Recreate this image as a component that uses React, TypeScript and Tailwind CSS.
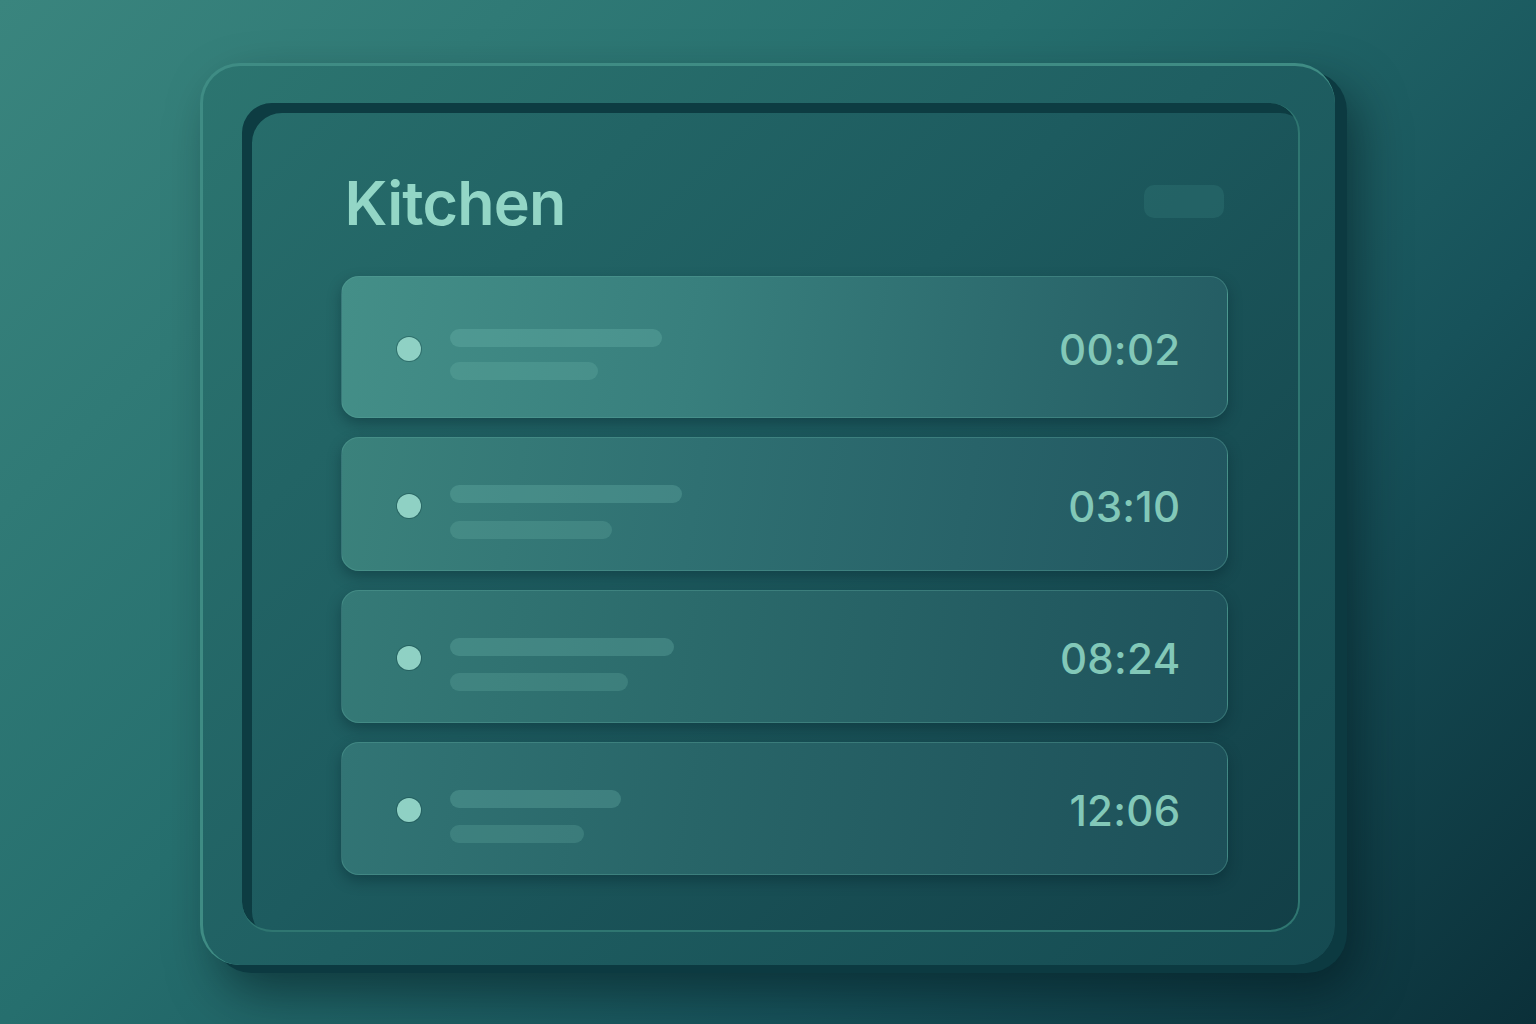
import React from 'react';

type Timer = {
  time: string;
  line1: number;
  line2: number;
  gap: number;
  height: number;
  bg: string;
};

const timers: Timer[] = [
  { time: '00:02', line1: 212, line2: 148, gap: 15, height: 142, bg: 'bg-[linear-gradient(100deg,#448f88_0%,#387f7d_40%,#245c63_100%)]' },
  { time: '03:10', line1: 232, line2: 162, gap: 18, height: 134, bg: 'bg-[linear-gradient(100deg,#3b827c_0%,#2f7072_40%,#215660_100%)]' },
  { time: '08:24', line1: 224, line2: 178, gap: 17, height: 133, bg: 'bg-[linear-gradient(100deg,#357a77_0%,#2b6a6b_40%,#1e525b_100%)]' },
  { time: '12:06', line1: 171, line2: 134, gap: 17, height: 133, bg: 'bg-[linear-gradient(100deg,#327575_0%,#286568_40%,#1d5059_100%)]' },
];

function TimerCard({ t }: { t: Timer }) {
  return (
    <div
      className={`flex items-center rounded-[18px] border border-[#5aa59c]/40 pl-[55px] pr-[46px] shadow-[0_6px_14px_rgba(4,30,36,0.35)] ${t.bg}`}
      style={{ height: t.height }}
    >
      <div className="mt-[3px] h-[24px] w-[24px] shrink-0 rounded-full bg-[#8fd1c4] shadow-[0_0_0_1px_rgba(20,70,70,0.4)]" />
      <div className="ml-[29px] mt-[15px] flex flex-col" style={{ gap: t.gap }}>
        <div className="h-[18px] rounded-full bg-[#7cc7bb]/25" style={{ width: t.line1 }} />
        <div className="h-[18px] rounded-full bg-[#7cc7bb]/20" style={{ width: t.line2 }} />
      </div>
      <div className="ml-auto mt-[5px] text-[42px] font-medium leading-none tracking-[0.3px] text-[#82c8b8] [font-family:Inter,'Noto_Sans',sans-serif]">
        {t.time}
      </div>
    </div>
  );
}

export default function App() {
  return (
    <div className="flex h-[1024px] w-[1536px] items-center justify-center overflow-hidden bg-[linear-gradient(135deg,#3a857e_0%,#266f6e_40%,#17525a_70%,#0b3039_100%)] [font-family:Inter,'Noto_Sans',sans-serif]">
      <div className="ml-[-2px] mt-[4px] h-[902px] w-[1135px] rounded-[40px] border-t-[3px] border-l-[3px] border-[#3f8c84] bg-[linear-gradient(135deg,#2c7570_0%,#1f5f62_50%,#154a51_100%)] pl-[39px] pt-[37px] shadow-[12px_8px_0_#0c3a41,20px_26px_50px_rgba(2,20,26,0.55)]">
        <div className="flex h-[829px] w-[1058px] flex-col rounded-[30px] border-r-2 border-b-2 border-[#2f7671] bg-[linear-gradient(135deg,#276d6b_0%,#1d5b5f_45%,#123f47_100%)] pl-[99px] pr-[70px] shadow-[inset_10px_10px_0_#0d3c42]">
          <div className="mt-[70px] flex items-center justify-between">
            <h1 className="ml-[4px] text-[61px] font-semibold leading-none tracking-[-0.8px] text-[#93d6c6]">Kitchen</h1>
            <div className="mr-[4px] mt-[-4px] h-[33px] w-[80px] rounded-[10px] bg-[#2a6a6c]/60" />
          </div>
          <div className="mt-[42px] flex flex-col gap-[19px]">
            {timers.map((t) => (
              <TimerCard key={t.time} t={t} />
            ))}
          </div>
        </div>
      </div>
    </div>
  );
}
